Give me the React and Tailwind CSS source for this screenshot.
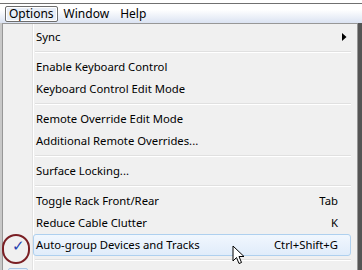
import React from 'react';

const Separator = () => (
  <div className="flex h-[8px] items-center">
    <div className="w-[30px] shrink-0" />
    <div className="ml-[2px] mr-[6px] flex-1 border-t border-[#e0e0e0] border-b-white border-b" />
  </div>
);

const Item = ({ label, shortcut, arrow, checked, highlighted }) => (
  <div className="relative flex h-[22px] items-center">
    <div className="relative flex w-[30px] shrink-0 items-center justify-center">
      {checked && (
        <>
          <span className="text-[15px] leading-none text-[#2343b0]">✓</span>
          <div className="absolute left-[-1px] top-[-4px] h-[30px] w-[28px] rounded-full border-2 border-[#7a1f24]" />
        </>
      )}
    </div>
    <div
      className={
        'flex h-full flex-1 items-center pl-[2px] pr-[12px] mr-[6px] ' +
        (highlighted
          ? 'rounded-[3px] border border-[#aed0ef] bg-gradient-to-b from-[#f1f7fe] to-[#e0ecfa]'
          : 'border border-transparent')
      }
    >
      <span className="flex-1">{label}</span>
      {shortcut && <span>{shortcut}</span>}
      {arrow && (
        <svg width="5" height="8" viewBox="0 0 5 8" className="mr-[-9px]">
          <path d="M0 0 L4.5 4 L0 8 Z" fill="#000" />
        </svg>
      )}
    </div>
  </div>
);

export default function App() {
  return (
    <div
      className="relative h-[270px] w-[362px] overflow-hidden bg-white text-[11.3px] text-black"
      style={{ fontFamily: '"Noto Sans", "Open Sans", sans-serif' }}
    >
      {/* menu bar */}
      <div className="mt-[3px] flex h-[20px] items-center border-t border-[#707070] bg-gradient-to-b from-white from-30% to-[#dbe3f2] pl-[5px] text-[12px]">
        <div className="flex h-[16px] items-center rounded-[2px] border border-[#6d6d6d] bg-[#e8eef8] px-[3px] shadow-[inset_0_0_0_1px_#fff]">
          Options
        </div>
        <div className="ml-[3px] px-[3px]">Window</div>
        <div className="ml-[5px] px-[3px]">Help</div>
      </div>
      {/* dropdown */}
      <div className="flex">
        <div className="w-[2px] bg-[#c8c8c8]" />
        <div className="relative w-[356px] border-l border-t border-r border-[#979797] bg-[#f0f0f0] pt-[2px]">
          <div className="absolute bottom-0 left-[29px] top-0 w-[2px] border-l border-[#e2e2e2] border-r border-r-white" />
          <Item label="Sync" arrow />
          <Separator />
          <Item label="Enable Keyboard Control" />
          <Item label="Keyboard Control Edit Mode" />
          <Separator />
          <Item label="Remote Override Edit Mode" />
          <Item label="Additional Remote Overrides..." />
          <Separator />
          <Item label="Surface Locking..." />
          <Separator />
          <Item label="Toggle Rack Front/Rear" shortcut="Tab" />
          <Item label="Reduce Cable Clutter" shortcut="K" />
          <Item label="Auto-group Devices and Tracks" shortcut="Ctrl+Shift+G" checked highlighted />
          <Separator />
          <div className="relative flex h-[22px] items-center">
            <div className="ml-[5px] mt-[6px] h-[20px] w-[20px] rounded-[2px] border border-[#a9c6e6] bg-[#e6eef9]" />
          </div>
        </div>
        <div className="flex-1 bg-[#555]" />
      </div>
      {/* mouse cursor */}
      <svg className="absolute left-[232px] top-[245px]" width="14" height="22" viewBox="0 0 14 22">
        <path d="M1 1 L1 16 L4.5 12.5 L7 18.5 L9.5 17.5 L7 11.5 L12 11.5 Z" fill="#fff" stroke="#000" strokeWidth="1" strokeLinejoin="round" />
      </svg>
    </div>
  );
}
